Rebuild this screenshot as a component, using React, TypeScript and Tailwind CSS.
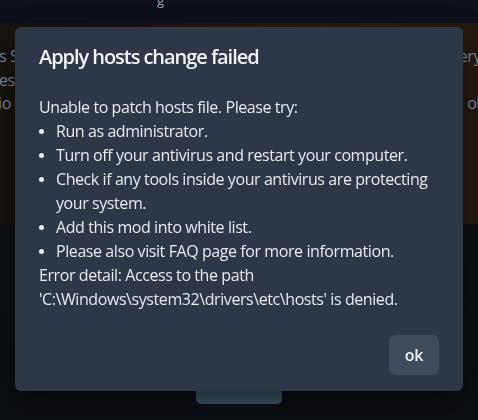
import React from 'react';

const tips = [
  'Run as administrator.',
  'Turn off your antivirus and restart your computer.',
  'Check if any tools inside your antivirus are protecting your system.',
  'Add this mod into white list.',
  'Please also visit FAQ page for more information.',
];

function Backdrop() {
  return (
    <div className="flex h-[420px] flex-col overflow-hidden bg-[#0c0f14]">
      {/* Top navigation bar */}
      <div className="flex h-[23px] shrink-0 items-start justify-center bg-[#0e1119]">
        <span className="-mt-[9px] ml-[-157px] text-[13px] text-[#9aa6b8]">g</span>
      </div>

      {/* Hero banner with artwork */}
      <div className="flex h-[201px] shrink-0 flex-col justify-start bg-[linear-gradient(90deg,#17130e_0%,#1d160f_30%,#251b11_60%,#2b1e11_80%,#24190f_100%)] pt-[22px] text-[16px] leading-[23.5px] tracking-[-0.4px] text-[#7f8a9c]">
        <div className="flex justify-between">
          <span className="-ml-[1px]">s S</span>
          <span className="-mr-[3px]">ery</span>
        </div>
        <div className="flex justify-between">
          <span className="-ml-[1px]">es,</span>
          <span></span>
        </div>
        <div className="flex justify-between">
          <span className="-ml-[2px]">io</span>
          <span className="-mr-[2px]">ol</span>
        </div>
      </div>

      {/* Page area under the banner */}
      <div className="flex flex-1 justify-center bg-[linear-gradient(180deg,#0c0f14,#0b0e13)]">
        <div className="mt-[150px] h-[30px] w-[86px] rounded-[5px] bg-[linear-gradient(180deg,#2c3f4b,#3a5565)]" />
      </div>
    </div>
  );
}

function ErrorDialog() {
  return (
    <div className="fixed left-[15px] top-[27px] flex w-[448px] flex-col rounded-md bg-[#2e3748] text-[#e8eaee] shadow-[0_10px_30px_rgba(0,0,0,0.45)]">
      <header className="px-6 pb-4 pt-[15px] text-[20px] font-semibold leading-[30px] tracking-[-1.05px] text-[#f3f4f6]">
        Apply hosts change failed
      </header>

      <div className="px-6 pb-2 pt-[7px] text-[16px] leading-[24px] tracking-[-0.42px]">
        <p>Unable to patch hosts file. Please try:</p>
        <ul className="flex flex-col">
          {tips.map((tip) => (
            <li key={tip} className="flex">
              <span className="flex h-[24px] w-[17px] shrink-0 items-center">
                <span className="h-[5px] w-[5px] rounded-full bg-[#eceef2]" />
              </span>
              <span>{tip}</span>
            </li>
          ))}
        </ul>
        <p>Error detail: Access to the path 'C:\Windows\system32\drivers\etc\hosts' is denied.</p>
      </div>

      <footer className="flex justify-end px-6 py-4">
        <button
          type="button"
          className="h-10 w-[50px] rounded-md bg-[#414a5a] text-[16px] font-semibold tracking-[-0.3px] text-[#eef0f3]"
        >
          ok
        </button>
      </footer>
    </div>
  );
}

export default function App() {
  return (
    <div className="relative h-[420px] w-[478px] overflow-hidden font-['Open_Sans',sans-serif]">
      <Backdrop />
      <ErrorDialog />
    </div>
  );
}
